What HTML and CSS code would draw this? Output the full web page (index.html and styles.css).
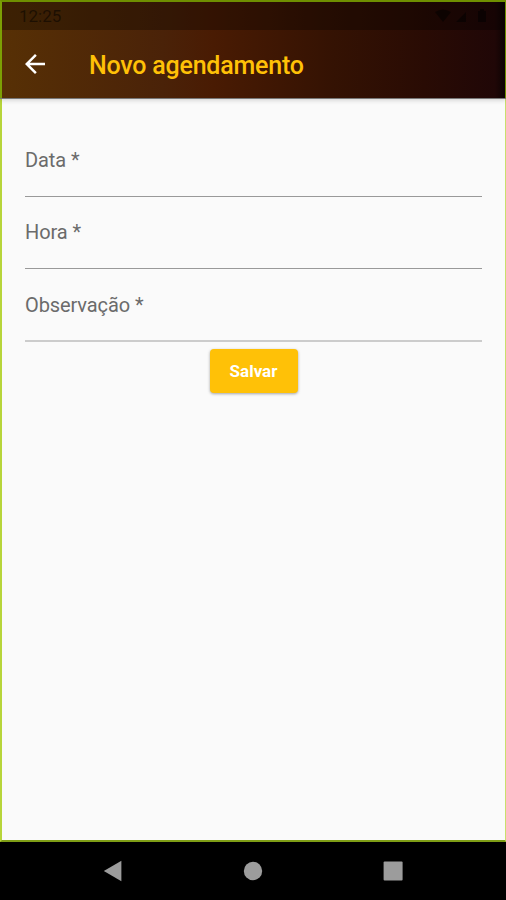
FILE: index.html
```html
<!DOCTYPE html>
<html lang="pt-BR">
<head>
<meta charset="utf-8">
<title>Novo agendamento</title>
<link rel="stylesheet" href="styles.css">
</head>
<body>
<div class="screen">
  <header class="top">
    <div class="status">
      <span class="clock">12:25</span>
      <svg class="signals" width="56" height="16" viewBox="0 0 56 16"><path d="M0 4Q8-1 16 4L8 14Z M21 14L31 4V14Z M43 3h2V1h4v2h2v11h-8Z"/></svg>
    </div>
    <div class="appbar">
      <svg class="back" width="30" height="30" viewBox="0 0 24 24"><path d="M20 11H7.83l5.59-5.59L12 4l-8 8 8 8 1.41-1.41L7.83 13H20z"/></svg>
      <h1 class="title">Novo agendamento</h1>
    </div>
  </header>
  <main class="form">
    <div class="field"><label>Data *</label></div>
    <div class="field"><label>Hora *</label></div>
    <div class="field last"><label>Observação *</label></div>
    <button class="save">Salvar</button>
  </main>
</div>
<nav class="navbar">
  <svg width="20" height="22" viewBox="0 0 20 22"><path d="M.8 11L18.4.8V21.2Z"/></svg>
  <svg width="20" height="22" viewBox="0 0 20 22"><circle cx="10" cy="11" r="9.2"/></svg>
  <svg width="20" height="22" viewBox="0 0 20 22"><rect x=".6" y="1.6" width="19" height="19" rx="1"/></svg>
</nav>
</body>
</html>
```
FILE: styles.css
```css
* { box-sizing: border-box; }
body {
  margin: 0;
  height: 900px;
  display: flex;
  flex-direction: column;
  background: #000;
  font-family: Roboto, sans-serif;
  overflow: hidden;
}
.screen {
  height: 842px;
  display: flex;
  flex-direction: column;
  background: #fafafa;
}
.top {
  height: 98px;
  flex: none;
  border: solid #6f8f00;
  border-width: 2px 1px 0 2px;
  border-left-color: #7c9f04;
  background: linear-gradient(90deg, #573005 0%, #4a2208 32%, #491b03 42%, #341203 66%, #290b04 84%, #200707 98%, #0d0303 100%);
  box-shadow: 0 1px 0 #777, 0 2px 5px rgba(0, 0, 0, .18);
  z-index: 1;
}
.status {
  height: 28px;
  padding: 0 14px 0 17px;
  display: flex;
  align-items: center;
  justify-content: space-between;
  background: rgba(0, 0, 0, .3);
}
.clock {
  font-size: 17px;
  line-height: 28px;
  color: rgba(0, 0, 0, .5);
}
.signals { fill: rgba(0, 0, 0, .5); }
.appbar {
  height: 68px;
  padding-left: 18px;
  display: flex;
  align-items: center;
}
.back { fill: #fff; }
.title {
  margin: 4px 0 0 39px;
  font-size: 25px;
  line-height: 30px;
  font-weight: 500;
  letter-spacing: -.22px;
  color: #ffc107;
}
.form {
  flex: 1;
  display: flex;
  flex-direction: column;
  padding: 45px 23px 0;
  border-style: solid;
  border-width: 0 1px 2px 2px;
  border-color: #b7d53a #c9df6c #7e9d16 #b7d53a;
}
.field {
  height: 72.4px;
  padding-top: 5px;
}
.field label {
  display: block;
  height: 49px;
  border-bottom: 1px solid #999;
  font-size: 20px;
  line-height: 25px;
  letter-spacing: -.1px;
  color: #6b6b6b;
}
.field.last { height: 61.2px; }
.field.last label {
  height: 49.5px;
  border-bottom: 2px solid #ccc;
}
.save {
  align-self: center;
  width: 88px;
  height: 44px;
  margin: 0;
  padding: 0;
  border: 0;
  border-radius: 4px;
  background: #ffc107;
  box-shadow: 0 1px 3px rgba(0, 0, 0, .35);
  font: 700 17px/44px Roboto, sans-serif;
  color: #fff;
}
.navbar {
  height: 58px;
  display: flex;
  justify-content: center;
  align-items: center;
  gap: 120px;
  fill: #9c9c9c;
}
```
